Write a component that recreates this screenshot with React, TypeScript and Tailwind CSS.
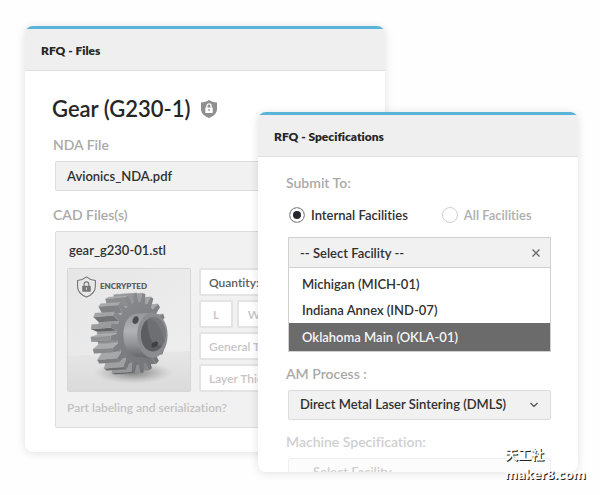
import { useState } from "react";
import type { ReactNode } from "react";

const FACILITIES = ["Michigan (MICH-01)", "Indiana Annex (IND-07)", "Oklahoma Main (OKLA-01)"];

function Panel({ title, className, children }: { title: string; className: string; children: ReactNode }) {
  return (
    <section className={`overflow-hidden rounded-lg bg-white shadow-[0_1px_10px_rgba(0,0,0,0.12)] ${className}`}>
      <header className="border-t-[3px] border-b border-t-[#5ab4d8] border-b-[#e0e0e0] bg-[#efefef] px-4 pt-3 pb-[9px]">
        <h2 className="text-[12px] leading-5 font-extrabold text-[#262626]">{title}</h2>
      </header>
      {children}
    </section>
  );
}

function ShieldBadge() {
  return (
    <svg viewBox="0 0 16 18" className="h-[18px] w-4" aria-hidden="true">
      <path d="M8 0C6 1.400 3 2.200 0 2.400V9c0 4.200 3.500 7.500 8 9 4.500-1.500 8-4.800 8-9V2.400C13 2.200 10 1.400 8 0Z" fill="#8f8f8f" />
      <path d="M5.900 8V6a2.100 2.100 0 0 1 4.200 0v2" fill="none" stroke="#fff" strokeWidth="1.300" />
      <rect x="4.300" y="7.500" width="7.400" height="5.500" rx=".6" fill="#fff" />
      <path d="M8 9v2" stroke="#8f8f8f" strokeWidth="1.200" />
    </svg>
  );
}

type Point = [number, number];
const TEETH = 20;
const DEPTH: Point = [-60, 4];

function rim(): Point[] {
  const points: Point[] = [];
  for (let i = 0; i < TEETH; i++) {
    const profile = [[0, 0.77], [0.26, 0.77], [0.42, 1], [0.78, 1], [0.94, 0.77]];
    for (const [t, r] of profile) {
      const a = ((i + t) / TEETH) * Math.PI * 2;
      points.push([236 + 85 * r * Math.cos(a), 232 + 122 * r * Math.sin(a)]);
    }
  }
  return points;
}

function GearPicture() {
  const points = rim();
  const sides = points
    .map((p, i) => {
      const q = points[(i + 1) % points.length];
      const length = Math.hypot(q[0] - p[0], q[1] - p[1]) || 1;
      const dx = (q[0] - p[0]) / length;
      const dy = (q[1] - p[1]) / length;
      const light = Math.round(124 + 46 * (0.85 * dx - 0.55 * dy));
      return {
        key: i,
        x: (p[0] + q[0]) / 2,
        visible: dy * DEPTH[0] - dx * DEPTH[1] > 0,
        d: `M${p[0]} ${p[1]}L${q[0]} ${q[1]}L${q[0] + DEPTH[0]} ${q[1] + DEPTH[1]}L${p[0] + DEPTH[0]} ${p[1] + DEPTH[1]}Z`,
        fill: `rgb(${light},${light + 1},${light + 3})`,
      };
    })
    .filter((s) => s.visible)
    .sort((a, b) => b.x - a.x);
  const face = "M" + points.map((p) => `${p[0]} ${p[1]}`).join("L") + "Z";
  return (
    <svg viewBox="22 38 370 370" className="size-full" role="img" aria-label="Gear">
      <defs>
        <linearGradient id="wall" x1="0" y1="0" x2="1" y2="1">
          <stop offset="0" stopColor="#e6e6e6" />
          <stop offset="1" stopColor="#efefef" />
        </linearGradient>
        <linearGradient id="floor" x1="0" y1="0" x2="0" y2="1">
          <stop offset="0" stopColor="#e6e6e6" />
          <stop offset="1" stopColor="#dadada" />
        </linearGradient>
        <linearGradient id="face" x1="0" y1="0" x2="0.5" y2="1">
          <stop offset="0" stopColor="#8b8d90" />
          <stop offset="1" stopColor="#737578" />
        </linearGradient>
        <linearGradient id="hub" x1="0" y1="0" x2="0" y2="1">
          <stop offset="0" stopColor="#94969a" />
          <stop offset="0.4" stopColor="#b0b2b5" />
          <stop offset="0.7" stopColor="#909296" />
          <stop offset="1" stopColor="#636569" />
        </linearGradient>
        <radialGradient id="shadow">
          <stop offset="0" stopColor="#666" stopOpacity="0.8" />
          <stop offset="0.5" stopColor="#777" stopOpacity="0.4" />
          <stop offset="1" stopColor="#999" stopOpacity="0" />
        </radialGradient>
      </defs>
      <rect x="22" y="38" width="370" height="370" fill="url(#wall)" />
      <path d="M22 301L392 287V408H22Z" fill="url(#floor)" />
      <ellipse cx="220" cy="352" rx="120" ry="34" fill="url(#shadow)" />
      {sides.map((s) => (
        <path key={s.key} d={s.d} fill={s.fill} stroke={s.fill} strokeWidth="0.500" />
      ))}
      <path d={face} fill="url(#face)" />
      <path d="M232 173C205 174 190 204 190 238s15 62 42 66l46 4V171Z" fill="url(#hub)" />
      <ellipse cx="278" cy="239" rx="46" ry="69" fill="#8a8c90" />
      <ellipse cx="281" cy="236" rx="37" ry="52" fill="#6d6f73" />
      <path d="M262 192c-23 17-25 68-3 88 14 13 36 9 49-11-18 4-32-6-38-27-6-19-7-37-8-50Z" fill="#5b5d61" />
      <path d="M271 187c20-8 35 6 42 27 6 18 5 34 1 47-3-31-15-60-43-74Z" fill="#77797d" />
      <ellipse cx="227" cy="193" rx="9" ry="12" fill="#4b4d51" transform="rotate(18 227 193)" />
      <ellipse cx="285" cy="267" rx="11" ry="7" fill="#3e4044" transform="rotate(-35 285 267)" />
      <path d="M78 62c-8 7-17 10-27 11v18c0 16 12 26 27 32 15-6 27-16 27-32V73c-10-1-19-4-27-11Z" fill="none" stroke="#777" strokeWidth="3.500" />
      <path d="M71 91v-7a7 7 0 0 1 14 0v7" fill="none" stroke="#777" strokeWidth="3.500" />
      <rect x="65" y="89" width="26" height="18" rx="2" fill="#777" />
      <path d="M78 94v7" stroke="#ddd" strokeWidth="3" />
    </svg>
  );
}

const miniInput =
  "h-7 w-full min-w-0 rounded-xs border-2 border-[#e3e3e3] bg-white px-2 text-[12px] font-semibold";

function FilesPanel() {
  return (
    <Panel title="RFQ - Files" className="ml-[25px] w-3/5">
      <div className="px-[30px] pt-5 pb-6">
        <div className="-ml-[3px] flex items-center gap-[11px]">
          <h1 className="text-[22px] leading-9 font-semibold text-[#262626]">Gear (G230-1)</h1>
          <ShieldBadge />
        </div>
        <label htmlFor="nda" className="-ml-0.5 mt-2 block text-[14px] leading-5 font-semibold text-[#a9a9a9]">
          NDA File
        </label>
        <input
          id="nda"
          readOnly
          defaultValue="Avionics_NDA.pdf"
          className="mt-[6px] block h-[30px] w-full rounded-xs border border-[#dcdcdc] bg-[#f1f1f1] px-[11px] text-[13px] font-semibold text-[#303030]"
        />
        <h3 className="-ml-0.5 mt-[14px] text-[14px] leading-5 font-semibold text-[#a9a9a9]">CAD Files(s)</h3>
        <div className="mt-[6px] rounded-xs border border-[#dcdcdc] bg-[#f1f1f1] px-[11px] pt-2 pb-[9px]">
          <p className="px-0.5 text-[13px] leading-5 font-semibold text-[#303030]">gear_g230-01.stl</p>
          <div className="mt-2 flex gap-2">
            <figure className="relative size-[124px] shrink-0 overflow-hidden rounded-xs border border-[#d6d6d6]">
              <GearPicture />
              <figcaption className="absolute top-[9px] left-8 text-[8px] leading-4 font-extrabold text-[#606060]">
                ENCRYPTED
              </figcaption>
            </figure>
            <div className="flex min-w-0 flex-1 flex-col gap-1">
              <input aria-label="Quantity" placeholder="Quantity:" className={`${miniInput} placeholder:text-[#5c5c5c]`} />
              <div className="flex gap-1">
                {["L", "W", "H"].map((side) => (
                  <input
                    key={side}
                    aria-label={side}
                    placeholder={side}
                    className="h-7 w-[34px] rounded-xs border-2 border-[#e3e3e3] bg-white text-center text-[12px] font-semibold placeholder:text-[#c6c6c6]"
                  />
                ))}
              </div>
              <input aria-label="General Tolerance" placeholder="General Tolerance" className={`${miniInput} placeholder:text-[#c6c6c6]`} />
              <input aria-label="Layer Thickness" placeholder="Layer Thickness" className={`${miniInput} placeholder:text-[#c6c6c6]`} />
            </div>
          </div>
          <p className="mt-[6px] text-[12px] leading-5 font-semibold text-[#c2c2c2]">Part labeling and serialization?</p>
        </div>
      </div>
    </Panel>
  );
}

function Radio({ label, checked, onChange }: { label: string; checked: boolean; onChange: () => void }) {
  return (
    <label className={`flex items-center gap-[6px] text-[13px] leading-5 font-semibold ${checked ? "text-[#303030]" : "text-[#adadad]"}`}>
      <input
        type="radio"
        name="facilities"
        checked={checked}
        onChange={onChange}
        className="size-4 appearance-none rounded-full border border-[#cfcfcf] bg-white checked:border-[#a5a5a5] checked:bg-[#25252d] checked:shadow-[inset_0_0_0_3px_white]"
      />
      {label}
    </label>
  );
}

function Chevron() {
  return (
    <svg viewBox="0 0 8 6" className="pointer-events-none absolute top-3 right-[13px] h-[6px] w-2" aria-hidden="true">
      <path d="M.5 1 4 4.500 7.500 1" fill="none" stroke="#4a4a4a" strokeWidth="1.200" />
    </svg>
  );
}

function SpecificationsPanel() {
  const [internal, setInternal] = useState(true);
  const [facility, setFacility] = useState(2);
  return (
    <Panel title="RFQ - Specifications" className="absolute top-[112px] right-[22px] left-[43%] h-[360px]">
      <div className="pr-[27px] pl-[30px] pt-4">
        <h3 className="-ml-0.5 text-[14px] leading-5 font-semibold text-[#a9a9a9]">Submit To:</h3>
        <div className="mt-3 flex gap-[34px] pl-px">
          <Radio label="Internal Facilities" checked={internal} onChange={() => setInternal(true)} />
          <Radio label="All Facilities" checked={!internal} onChange={() => setInternal(false)} />
        </div>
        <div className="mt-3 border border-[#d0d0d0] text-[13px] leading-5 font-semibold text-[#303030]">
          <div className="flex h-[30px] items-center justify-between border-b border-[#d0d0d0] bg-[#f1f1f1] pr-[10px] pl-[11px]">
            <span>-- Select Facility --</span>
            <button type="button" aria-label="Close">
              <svg viewBox="0 0 8 8" className="size-2" aria-hidden="true">
                <path d="M.5.5l7 7m0-7l-7 7" stroke="#666" strokeWidth="1.300" />
              </svg>
            </button>
          </div>
          <ul role="listbox" aria-label="Facility" className="pt-[3px]">
            {FACILITIES.map((name, i) => (
              <li
                key={name}
                role="option"
                aria-selected={i === facility}
                onClick={() => setFacility(i)}
                className={`px-[13px] ${i === facility ? "bg-[#6b6b6b] py-1 text-[#f5f5f5]" : "py-[3px]"}`}
              >
                {name}
              </li>
            ))}
          </ul>
        </div>
        <label htmlFor="process" className="-ml-0.5 mt-3 block text-[14px] leading-5 font-semibold text-[#a9a9a9]">
          AM Process :
        </label>
        <div className="relative mt-[6px]">
          <select
            id="process"
            className="block h-[30px] w-full appearance-none rounded-xs border border-[#dcdcdc] bg-[#f1f1f1] px-[11px] text-[13px] font-semibold text-[#303030]"
          >
            <option>Direct Metal Laser Sintering (DMLS)</option>
          </select>
          <Chevron />
        </div>
        <label htmlFor="machine" className="-ml-0.5 mt-3 block text-[14px] leading-5 font-semibold text-[#cfcfcf]">
          Machine Specification:
        </label>
        <select
          id="machine"
          className="mt-[6px] block h-[30px] w-full appearance-none rounded-xs border border-[#f0f0f0] bg-[#fcfcfc] px-[11px] text-[13px] font-semibold text-[#d0d0d0]"
        >
          <option>-- Select Facility --</option>
        </select>
      </div>
    </Panel>
  );
}

export default function App() {
  return (
    <main className="relative flow-root min-h-screen bg-[#fefefe] pt-[26px] font-['Lato','Noto_Sans_CJK_SC',sans-serif] [font-variant-ligatures:none]">
      <FilesPanel />
      <SpecificationsPanel />
      <div className="absolute top-[444px] right-3 w-[83px] font-['Noto_Sans','Noto_Sans_CJK_SC',sans-serif] text-[13px] leading-5 font-bold text-white [text-shadow:1px_1px_0_#222]">
        <p>天工社</p>
        <p>maker8.com</p>
      </div>
    </main>
  );
}
